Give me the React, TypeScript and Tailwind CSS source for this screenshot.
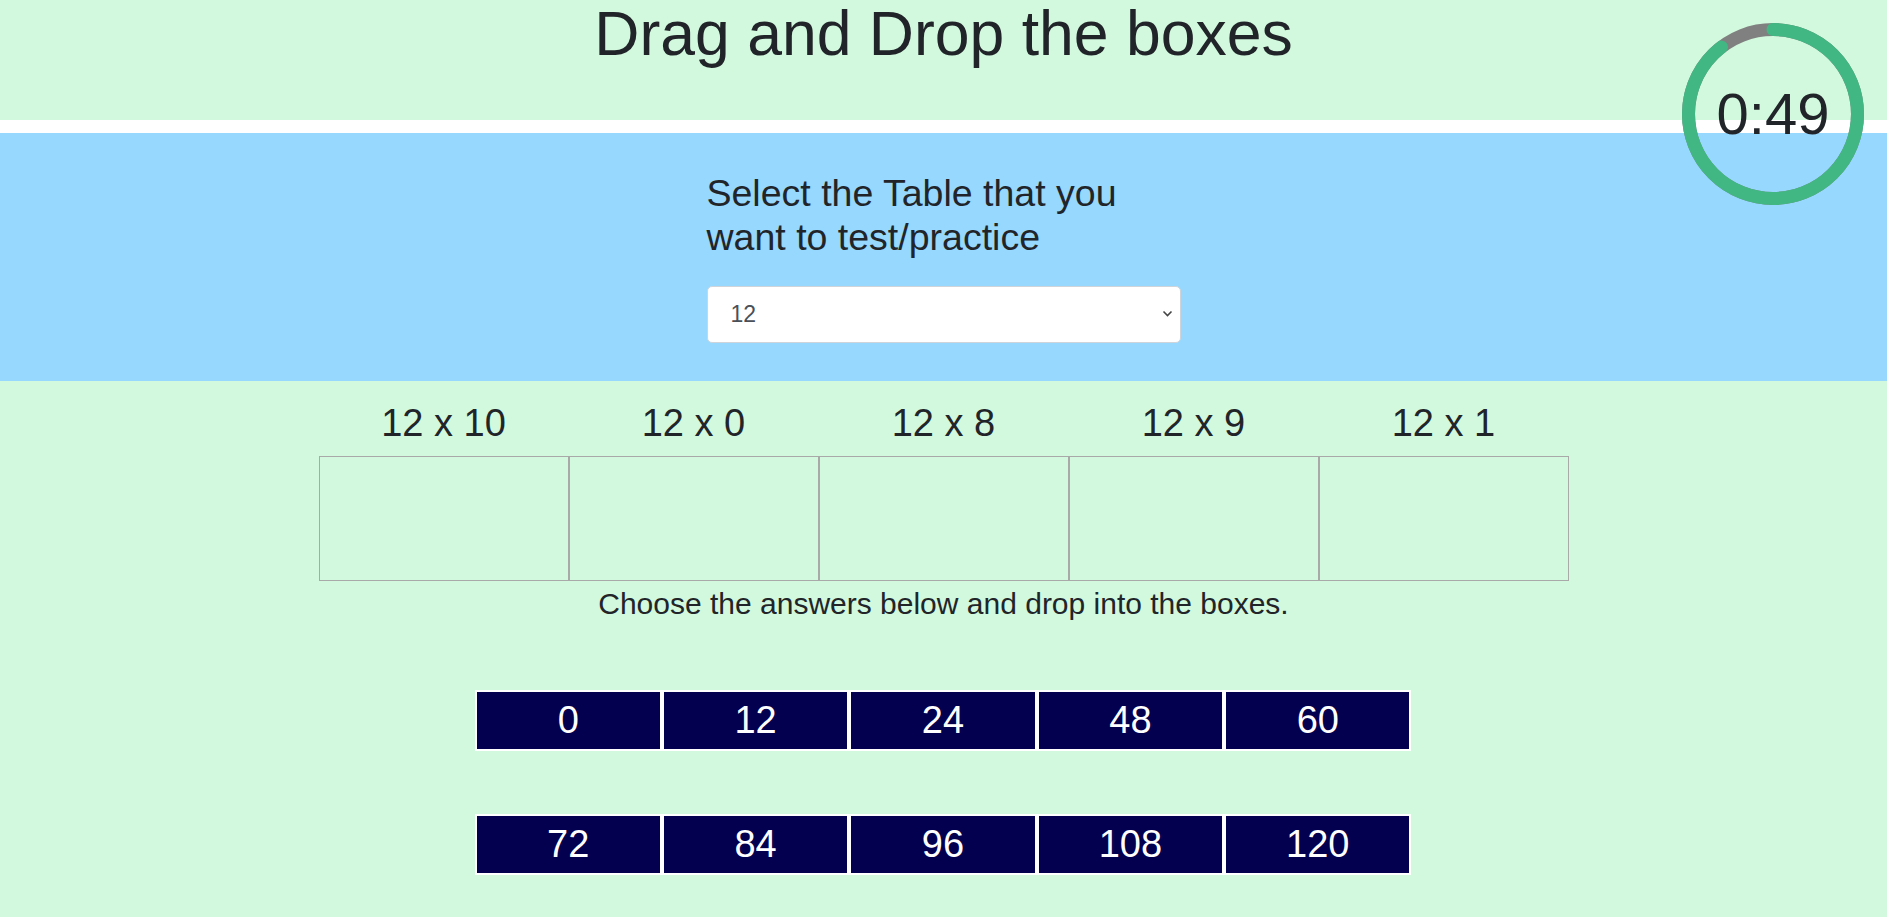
import { useState } from "react";

const LABELS = ["12 x 10", "12 x 0", "12 x 8", "12 x 9", "12 x 1"];
const ROW_ONE = [0, 12, 24, 48, 60];
const ROW_TWO = [72, 84, 96, 108, 120];

const R = 84.5;
const CIRC = 2 * Math.PI * R;

function Timer({ fraction, label }: { fraction: number; label: string }) {
  const green = CIRC * fraction;
  return (
    <div className="absolute top-[23px] right-[23px] w-[182px] h-[182px] flex items-center justify-center">
      <svg className="absolute inset-0" width="182" height="182" viewBox="0 0 182 182">
        <circle cx="91" cy="91" r={R} fill="none" stroke="#808080" strokeWidth="13" />
        <circle
          cx="91"
          cy="91"
          r={R}
          fill="none"
          stroke="#41b883"
          strokeWidth="13"
          strokeLinecap="round"
          strokeDasharray={`${green} ${CIRC}`}
          transform="rotate(-90 91 91)"
        />
      </svg>
      <span className="relative text-[58px] leading-none text-[#212529]">{label}</span>
    </div>
  );
}

function AnswerRow({ values, className }: { values: number[]; className: string }) {
  return (
    <div className={`grid grid-cols-5 w-[937px] ml-[calc(50%-469px)] ${className}`}>
      {values.map((v) => (
        <div key={v} className="h-[61px] border-2 border-white bg-[#030050] text-white text-[38px] flex items-center justify-center">
          {v}
        </div>
      ))}
    </div>
  );
}

export default function App() {
  const [table, setTable] = useState("12");

  return (
    <div className="relative min-h-[917px] bg-[#d2f9de] text-[#212529] font-['Liberation_Sans',Arial,sans-serif]">
      <div className="h-[120px] pt-[2px]">
        <h1 className="text-center text-[62.5px] leading-none font-normal">Drag and Drop the boxes</h1>
      </div>
      <div className="h-[13px] bg-white" />

      <div className="bg-[#97d8ff] pt-[38px] pb-[38px]">
        <div className="w-[474px] mx-auto">
          <p className="text-[37.5px] leading-[44px]">Select the Table that you want to test/practice</p>
          <div className="relative mt-[27px]">
            <select
              value={table}
              onChange={(e) => setTable(e.target.value)}
              className="appearance-none w-full h-[57px] bg-white border border-[#ced4da] rounded-[5px] pl-[23px] pr-10 text-[23px] text-[#495057] outline-none"
            >
              {Array.from({ length: 12 }, (_, i) => i + 1).map((n) => (
                <option key={n} value={String(n)}>
                  {n}
                </option>
              ))}
            </select>
            <svg className="absolute right-[8px] top-[24px] pointer-events-none" width="11" height="8" viewBox="0 0 11 8">
              <polyline points="1.5,1.5 5.5,5.5 9.5,1.5" fill="none" stroke="#444" strokeWidth="1.6" />
            </svg>
          </div>
        </div>
      </div>

      <div className="w-[1250px] mx-auto pt-[19px]">
        <div className="grid grid-cols-5">
          {LABELS.map((l) => (
            <div key={l} className="text-center text-[38px] leading-[46px]">
              {l}
            </div>
          ))}
        </div>
        <div className="grid grid-cols-5 mt-[10px]">
          {LABELS.map((l) => (
            <div key={l} className="h-[125px] border border-[#a9a9a9]" />
          ))}
        </div>
        <p className="text-center text-[30px] leading-[45px]">Choose the answers below and drop into the boxes.</p>
      </div>

      <AnswerRow values={ROW_ONE} className="mt-[64px]" />
      <AnswerRow values={ROW_TWO} className="mt-[63px]" />

      <Timer fraction={0.894} label="0:49" />
    </div>
  );
}
